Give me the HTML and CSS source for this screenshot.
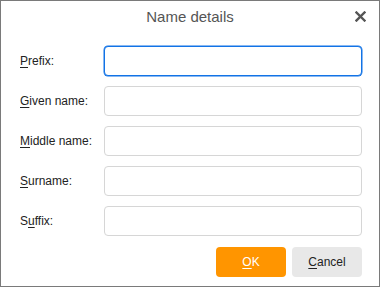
FILE: index.html
```html
<!DOCTYPE html>
<html lang="en">
<head>
<meta charset="UTF-8">
<title>Name details</title>
<link rel="stylesheet" href="styles.css">
</head>
<body>
<div class="dialog">

  <header class="dialog-header">
    <h1>Name details</h1>
    <button class="close" aria-label="Close">
      <svg width="11" height="11" viewBox="0 0 11 11"><path d="M1.5 1.5 L9.5 9.5 M9.5 1.5 L1.5 9.5" stroke="#555" stroke-width="2.4" stroke-linecap="square"/></svg>
    </button>
  </header>

  <form class="fields">
    <label for="f-prefix"><u>P</u>refix:</label>
    <input id="f-prefix" class="focused" type="text">

    <label for="f-given"><u>G</u>iven name:</label>
    <input id="f-given" type="text">

    <label for="f-middle"><u>M</u>iddle name:</label>
    <input id="f-middle" type="text">

    <label for="f-surname"><u>S</u>urname:</label>
    <input id="f-surname" type="text">

    <label for="f-suffix">S<u>u</u>ffix:</label>
    <input id="f-suffix" type="text">
  </form>

  <div class="actions">
    <button class="btn btn-ok"><u>O</u>K</button>
    <button class="btn btn-cancel"><u>C</u>ancel</button>
  </div>

</div>
</body>
</html>
```

FILE: styles.css
```css
* { margin: 0; padding: 0; box-sizing: border-box; }

body {
  background: #fff;
  font-family: 'Liberation Sans', Arial, sans-serif;
  color: #222;
}

.dialog {
  width: 380px;
  height: 287px;
  border: 1px solid #7a7a7a;
  background: #fff;
}

/* Header */
.dialog-header {
  height: 45px;
  display: flex;
  align-items: flex-start;
  justify-content: center;
  position: relative;
}

.dialog-header h1 {
  font-size: 15px;
  font-weight: 400;
  color: #555;
  margin-top: 7px;
}

.close {
  position: absolute;
  top: 9px;
  right: 12px;
  width: 13px;
  height: 13px;
  border: 0;
  background: none;
  display: flex;
  align-items: center;
  justify-content: center;
}

/* Fields */
.fields {
  display: grid;
  grid-template-columns: 84px 1fr;
  row-gap: 10px;
  align-items: center;
  padding: 0 17px 0 19px;
}

.fields label {
  font-size: 12px;
  color: #222;
}

.fields u { text-decoration-thickness: 1px; text-underline-offset: 2px; }

.fields input {
  height: 30px;
  border: 1px solid #d6d6d6;
  border-radius: 4px;
  background: #fff;
  outline: none;
}

.fields input.focused {
  border-color: #1273e6;
  box-shadow: 0 0 0 0.5px #1273e6;
}

/* Buttons */
.actions {
  display: flex;
  justify-content: flex-end;
  gap: 6px;
  padding: 11px 17px 0 0;
}

.btn {
  width: 70px;
  height: 30px;
  border: 0;
  border-radius: 4px;
  font-family: inherit;
  font-size: 12px;
}

.btn u { text-underline-offset: 2px; }

.btn-ok {
  background: #ff9500;
  color: #fff;
}

.btn-cancel {
  background: #e8e8e8;
  color: #222;
}
```
